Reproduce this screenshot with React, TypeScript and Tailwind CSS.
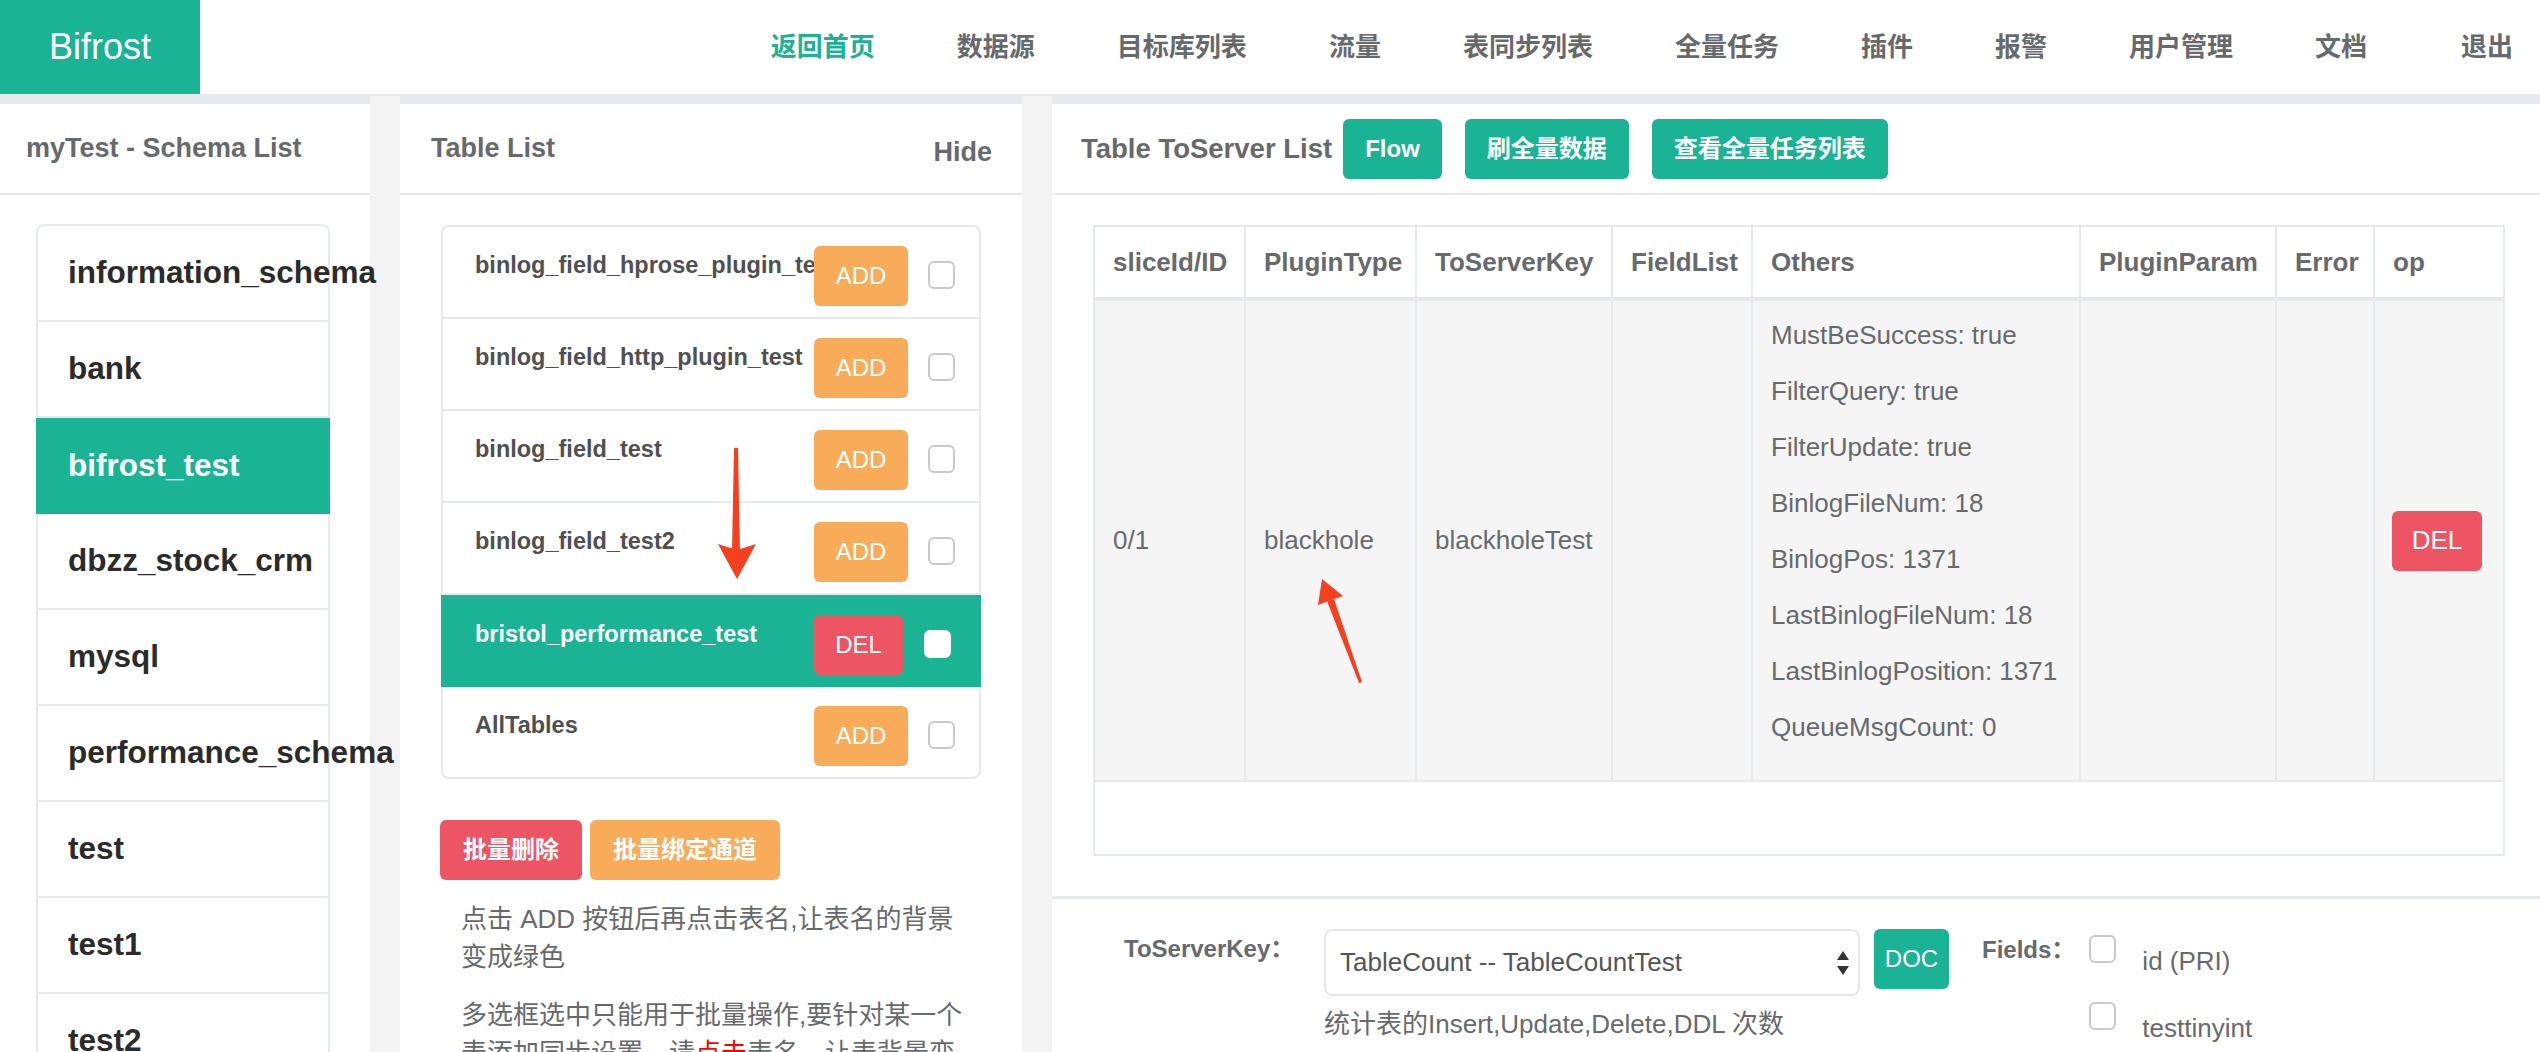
import React from "react";

const navItems = ["返回首页", "数据源", "目标库列表", "流量", "表同步列表", "全量任务", "插件", "报警", "用户管理", "文档"];

const schemas = [
  "information_schema",
  "bank",
  "bifrost_test",
  "dbzz_stock_crm",
  "mysql",
  "performance_schema",
  "test",
  "test1",
  "test2",
  "test3",
];

const tables = [
  { name: "binlog_field_hprose_plugin_test", active: false },
  { name: "binlog_field_http_plugin_test", active: false },
  { name: "binlog_field_test", active: false },
  { name: "binlog_field_test2", active: false },
  { name: "bristol_performance_test", active: true },
  { name: "AllTables", active: false },
];

const others = [
  "MustBeSuccess: true",
  "FilterQuery: true",
  "FilterUpdate: true",
  "BinlogFileNum: 18",
  "BinlogPos: 1371",
  "LastBinlogFileNum: 18",
  "LastBinlogPosition: 1371",
  "QueueMsgCount: 0",
];

function Checkbox({ white }: { white?: boolean }) {
  return (
    <span
      className={
        white
          ? "block h-[28px] w-[27px] shrink-0 rounded-[6px] border-2 border-white bg-white"
          : "block h-[28px] w-[27px] shrink-0 rounded-[6px] border-2 border-[#c9c9c9] bg-white"
      }
    />
  );
}

function PanelTitle({ children, className }: { children: React.ReactNode; className: string }) {
  return (
    <div className={"flex h-[91px] items-center border-b-2 border-[#e7eaec] text-[27px] font-bold text-[#676a6c] " + className}>
      {children}
    </div>
  );
}

function Arrows() {
  return (
    <svg className="pointer-events-none absolute left-0 top-0" width="2540" height="1052">
      <polygon points="734,448 738,448 740,552 732,552" fill="#f4401f" />
      <path d="M718 544 L737 579 L756 544 L737 550 Z" fill="#f4401f" />
      <polygon points="1327,601 1334,599 1362,682 1359,683" fill="#f4401f" />
      <path d="M1322 579 L1343 596 L1331 600 L1318 605 Z" fill="#f4401f" />
    </svg>
  );
}

export default function App() {
  return (
    <div className="relative h-[1052px] w-full overflow-hidden bg-[#f3f3f4] font-['Liberation_Sans','Noto_Sans_CJK_SC',sans-serif]">
      <header className="flex h-[96px] border-b-2 border-[#e7eaec] bg-white">
        <div className="flex w-[200px] items-center justify-center bg-[#1ab394] text-[36px] text-white">Bifrost</div>
        <nav className="ml-auto flex items-center gap-[82px] pr-[27px] text-[26px] font-semibold text-[#676a6c]">
          {navItems.map((item, i) => (
            <span key={item} className={i === 0 ? "text-[#1ab394]" : ""}>
              {item}
            </span>
          ))}
          <span className="ml-[12px]">退出</span>
        </nav>
      </header>

      <main className="flex h-[956px] gap-[30px]">
        {/* schema list */}
        <section className="w-[370px] shrink-0 border-t-[8px] border-[#e7eaec] bg-white">
          <PanelTitle className="pl-[26px]">myTest - Schema List</PanelTitle>
          <div className="pl-[36px] pr-[40px] pt-[29px]">
            <div className="rounded-[8px] border-2 border-[#e7eaec]">
              {schemas.map((s) =>
                s === "bifrost_test" ? (
                  <div
                    key={s}
                    className="-mx-[2px] flex h-[96px] items-center whitespace-nowrap bg-[#1ab394] pl-[32px] text-[31.5px] font-bold text-white"
                  >
                    {s}
                  </div>
                ) : (
                  <div
                    key={s}
                    className="flex h-[96px] items-center whitespace-nowrap border-b-2 border-[#e7eaec] pl-[30px] text-[31.5px] font-bold text-[#2b2b2b]"
                  >
                    {s}
                  </div>
                )
              )}
            </div>
          </div>
        </section>

        {/* table list */}
        <section className="w-[622px] shrink-0 border-t-[8px] border-[#e7eaec] bg-white">
          <PanelTitle className="justify-between pl-[31px] pr-[30px]">
            <span>Table List</span>
            <span className="mt-[8px]">Hide</span>
          </PanelTitle>
          <div className="px-[41px] pt-[30px]">
            <div className="rounded-[8px] border-2 border-[#e7eaec]">
              {tables.map((t, i) =>
                t.active ? (
                  <div key={t.name} className="-mx-[2px] flex h-[92px] items-center bg-[#1ab394] pl-[34px] pr-[30px]">
                    <div className="mb-[12px] min-w-0 flex-1 whitespace-nowrap text-[23.5px] font-bold text-white">{t.name}</div>
                    <button className="relative mt-[8px] h-[60px] w-[89px] rounded-[6px] bg-[#ed5565] text-[24px] text-white">DEL</button>
                    <span className="ml-[21px] mt-[6px]">
                      <Checkbox white />
                    </span>
                  </div>
                ) : (
                  <div
                    key={t.name}
                    className={
                      i === tables.length - 1
                        ? "flex h-[90px] items-center pl-[32px] pr-[24px]"
                        : "flex h-[92px] items-center border-b-2 border-[#e7eaec] pl-[32px] pr-[24px]"
                    }
                  >
                    <div className="mb-[12px] min-w-0 flex-1 whitespace-nowrap text-[23.5px] font-bold text-[#505050]">{t.name}</div>
                    <button className="relative mt-[8px] h-[60px] w-[94px] rounded-[6px] bg-[#f8ac59] text-[24px] text-white">ADD</button>
                    <span className="ml-[20px] mt-[6px]">
                      <Checkbox />
                    </span>
                  </div>
                )
              )}
            </div>

            <div className="mt-[41px] flex gap-[8px]">
              <button className="-ml-[1px] h-[60px] rounded-[6px] bg-[#ed5565] px-[23px] text-[24px] font-bold text-white">批量删除</button>
              <button className="h-[60px] rounded-[6px] bg-[#f8ac59] px-[23px] text-[24px] font-bold text-white">批量绑定通道</button>
            </div>

            <div className="mt-[20px] w-[528px] pl-[20px] text-[26px] leading-[38px] text-[#676a6c]">
              <p>点击 ADD 按钮后再点击表名,让表名的背景变成绿色</p>
              <p className="mt-[20px]">
                多选框选中只能用于批量操作,要针对某一个表添加同步设置，请<span className="text-[#ff0000]">点击</span>
                表名，让表背景变成绿色
              </p>
            </div>
          </div>
        </section>

        {/* to server list */}
        <section className="min-w-0 flex-1 border-t-[8px] border-[#e7eaec] bg-white">
          <PanelTitle className="pl-[29px]">
            <span className="text-[27.5px]">Table ToServer List</span>
            <div className="ml-[11px] flex gap-[23px] text-[24px] text-white">
              <button className="h-[60px] rounded-[6px] bg-[#1ab394] px-[22px] font-bold">Flow</button>
              <button className="h-[60px] rounded-[6px] bg-[#1ab394] px-[22px] font-bold">刷全量数据</button>
              <button className="h-[60px] rounded-[6px] bg-[#1ab394] px-[22px] font-bold">查看全量任务列表</button>
            </div>
          </PanelTitle>

          <div className="border-b-[3px] border-[#e7eaec] pb-[40px] pl-[41px] pt-[30px]">
            <table className="w-[1410px] table-fixed border-collapse text-left text-[26px] text-[#676a6c]">
              <colgroup>
                <col className="w-[151px]" />
                <col className="w-[171px]" />
                <col className="w-[196px]" />
                <col className="w-[140px]" />
                <col className="w-[328px]" />
                <col className="w-[196px]" />
                <col className="w-[98px]" />
                <col className="w-[130px]" />
              </colgroup>
              <thead>
                <tr className="h-[73px]">
                  {["sliceId/ID", "PluginType", "ToServerKey", "FieldList", "Others", "PluginParam", "Error", "op"].map((h) => (
                    <th key={h} className="border-2 border-b-4 border-[#e7eaec] pl-[18px] font-bold">
                      {h}
                    </th>
                  ))}
                </tr>
              </thead>
              <tbody>
                <tr className="bg-[#f5f5f5]">
                  <td className="border-2 border-[#e7eaec] pl-[18px]">0/1</td>
                  <td className="border-2 border-[#e7eaec] pl-[18px]">blackhole</td>
                  <td className="border-2 border-[#e7eaec] pl-[18px]">blackholeTest</td>
                  <td className="border-2 border-[#e7eaec]" />
                  <td className="border-2 border-[#e7eaec] pb-[34px] pl-[18px] pt-[16px]">
                    {others.map((o, i) => (
                      <p key={o} className={i === 0 ? "leading-[37px]" : "mt-[19px] leading-[37px]"}>
                        {o}
                      </p>
                    ))}
                  </td>
                  <td className="border-2 border-[#e7eaec]" />
                  <td className="border-2 border-[#e7eaec]" />
                  <td className="border-2 border-[#e7eaec] pl-[17px]">
                    <button className="h-[60px] w-[90px] rounded-[6px] bg-[#ed5565] text-[26px] text-white">DEL</button>
                  </td>
                </tr>
                <tr className="h-[74px]">
                  <td colSpan={8} className="border-2 border-[#e7eaec]" />
                </tr>
              </tbody>
            </table>
          </div>

          <div className="flex items-start pl-[72px] pt-[30px]">
            <div className="w-[200px] pt-[2px] text-[24px] font-bold text-[#676a6c]">ToServerKey：</div>
            <div className="w-[536px]">
              <div className="flex h-[67px] items-center rounded-[8px] border-2 border-[#e5e6e7] pl-[14px] pr-[9px] text-[26px] text-[#555]">
                <span className="flex-1">TableCount -- TableCountTest</span>
                <svg width="12" height="24" viewBox="0 0 12 24">
                  <polygon points="6,0 12,9 0,9" fill="#333" />
                  <polygon points="0,15 12,15 6,24" fill="#333" />
                </svg>
              </div>
              <div className="mt-[10px] text-[26px] leading-[36px] text-[#676a6c]">统计表的Insert,Update,Delete,DDL 次数</div>
            </div>
            <button className="ml-[14px] h-[60px] w-[75px] rounded-[6px] bg-[#1ab394] text-[24px] text-white">DOC</button>
            <div className="ml-[33px] pt-[3px] text-[24px] font-bold text-[#676a6c]">Fields：</div>
            <div className="ml-[14px]">
              {["id (PRI)", "testtinyint"].map((f) => (
                <div key={f} className="flex h-[67px] items-start">
                  <span className="mt-[6px]">
                    <Checkbox />
                  </span>
                  <span className="ml-[26px] mt-[14px] text-[26px] leading-[36px] text-[#676a6c]">{f}</span>
                </div>
              ))}
            </div>
          </div>
        </section>
      </main>

      <Arrows />
    </div>
  );
}
